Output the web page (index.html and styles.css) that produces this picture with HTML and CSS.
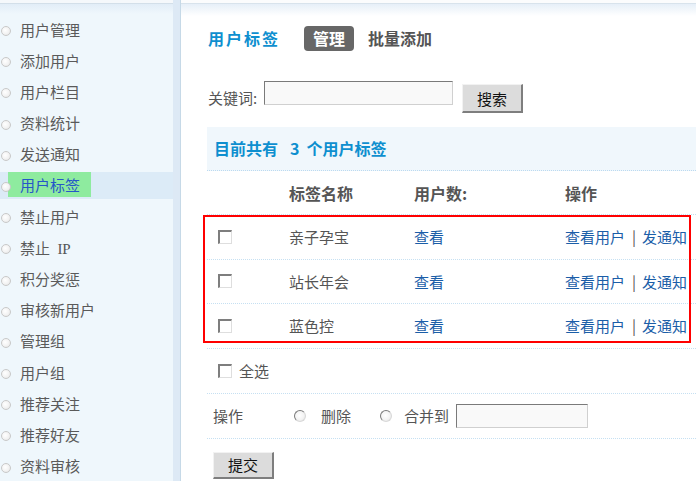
FILE: index.html
```html
<!DOCTYPE html>
<html lang="zh-CN">
<head>
<meta charset="utf-8">
<title>用户标签</title>
<link rel="stylesheet" href="styles.css">
</head>
<body>
<div class="page">
  <aside class="sidebar">
    <ul class="nav">
      <li class="nav-item"><a class="nav-link">用户管理</a></li>
      <li class="nav-item"><a class="nav-link">添加用户</a></li>
      <li class="nav-item"><a class="nav-link">用户栏目</a></li>
      <li class="nav-item"><a class="nav-link">资料统计</a></li>
      <li class="nav-item"><a class="nav-link">发送通知</a></li>
      <li class="nav-item nav-item-active"><a class="nav-link">用户标签</a></li>
      <li class="nav-item"><a class="nav-link">禁止用户</a></li>
      <li class="nav-item"><a class="nav-link">禁止&nbsp;<span class="latin">IP</span></a></li>
      <li class="nav-item"><a class="nav-link">积分奖惩</a></li>
      <li class="nav-item"><a class="nav-link">审核新用户</a></li>
      <li class="nav-item"><a class="nav-link">管理组</a></li>
      <li class="nav-item"><a class="nav-link">用户组</a></li>
      <li class="nav-item"><a class="nav-link">推荐关注</a></li>
      <li class="nav-item"><a class="nav-link">推荐好友</a></li>
      <li class="nav-item"><a class="nav-link">资料审核</a></li>
    </ul>
  </aside>
  <main class="main">
    <div class="title-row">
      <h1 class="title">用户标签</h1>
      <a class="tab tab-active">管理</a>
      <a class="tab">批量添加</a>
    </div>
    <form class="search">
      <label class="search-label">关键词:</label>
      <input class="text-input search-input" type="text">
      <button class="btn btn-search" type="button">搜索</button>
    </form>
    <div class="summary">目前共有<span class="num">3</span>个用户标签</div>
    <div class="table">
      <div class="tr th">
        <div class="td"></div>
        <div class="td">标签名称</div>
        <div class="td">用户数:</div>
        <div class="td">操作</div>
      </div>
      <div class="tr">
        <div class="td td-check"><input class="check" type="checkbox"></div>
        <div class="td">亲子孕宝</div>
        <div class="td"><a class="link">查看</a></div>
        <div class="td"><a class="link">查看用户</a><span class="sep">|</span><a class="link">发通知</a></div>
      </div>
      <div class="tr">
        <div class="td td-check"><input class="check" type="checkbox"></div>
        <div class="td">站长年会</div>
        <div class="td"><a class="link">查看</a></div>
        <div class="td"><a class="link">查看用户</a><span class="sep">|</span><a class="link">发通知</a></div>
      </div>
      <div class="tr">
        <div class="td td-check"><input class="check" type="checkbox"></div>
        <div class="td">蓝色控</div>
        <div class="td"><a class="link">查看</a></div>
        <div class="td"><a class="link">查看用户</a><span class="sep">|</span><a class="link">发通知</a></div>
      </div>
      <div class="highlight"></div>
    </div>
    <div class="select-all">
      <input class="check" type="checkbox"><span class="select-all-label">全选</span>
    </div>
    <div class="ops">
      <span class="ops-label">操作</span>
      <input class="radio" type="radio" name="op"><span class="ops-opt">删除</span>
      <input class="radio" type="radio" name="op"><span class="ops-opt ops-merge">合并到</span>
      <input class="text-input merge-input" type="text">
    </div>
    <button class="btn btn-submit" type="button">提交</button>
  </main>
</div>
</body>
</html>
```

FILE: styles.css
```css
* { box-sizing: border-box; }

html, body {
  margin: 0;
  padding: 0;
}

body {
  width: 696px;
  height: 481px;
  overflow: hidden;
  font-family: "Noto Sans CJK SC", "DejaVu Sans", sans-serif;
  font-size: 15px;
  color: #555;
  background: #fff;
}

.page {
  display: flex;
  height: 481px;
}

/* Sidebar */
.sidebar {
  width: 180px;
  flex: none;
  border-right: 7px solid #dde9f5;
  background: linear-gradient(#f5f8fb 0, #f5f8fb 3px, #d3dfe9 3px, #d3dfe9 4px, #e2edf7 4px, #eff7fc 14px);
  padding-top: 16.5px;
}

.nav {
  list-style: none;
  margin: 0;
  padding: 0;
}

.nav-item {
  position: relative;
  height: 27px;
  margin-bottom: 4.2px;
  display: flex;
  align-items: center;
}

.nav-item::before {
  content: "";
  position: absolute;
  left: 1px;
  top: 9.5px;
  width: 8px;
  height: 8px;
  border-radius: 50%;
  border: 1px solid #c9c9c9;
  background: radial-gradient(circle at 40% 40%, #ffffff 0, #f1f1f1 60%, #dcdcdc 100%);
}

.nav-link {
  display: inline-block;
  height: 25px;
  line-height: 25px;
  margin: -2px 0 0 8px;
  padding: 0 11px 0 12px;
  color: #5a5a5a;
  font-size: 15px;
}

.latin {
  margin-left: 4px;
  font-family: "Liberation Serif", serif;
  font-size: 15px;
  color: #555;
}

.nav-item-active {
  background: #dcebf7;
}

.nav-item-active .nav-link {
  background: #8eeb9f;
  color: #2657c8;
}

/* Main */
.main {
  flex: 1;
  min-width: 0;
  border-left: 1px solid #c6d9e7;
  padding: 26px 0 0 26px;
  background: linear-gradient(#fbfcfd 0, #fbfcfd 3px, #d8e3ec 3px, #d8e3ec 4px, #e6eff8 4px, #ffffff 16px);
}

.title-row {
  display: flex;
  align-items: center;
  height: 25px;
}

.title {
  margin: 0 24px 0 1px;
  font-size: 16px;
  font-weight: bold;
  letter-spacing: 2px;
  color: #0e8fcf;
  line-height: 25px;
}

.tab {
  font-size: 16px;
  font-weight: bold;
  color: #555;
  line-height: 25px;
  margin-left: 14px;
}

.tab-active {
  margin-left: 0;
  height: 25px;
  padding: 0 9px;
  border-radius: 4px;
  background: #676767;
  color: #fff;
}

/* Search */
.search {
  display: flex;
  align-items: flex-start;
  margin: 30px 0 0 0;
}

.search-label {
  width: 56px;
  margin: 5px 0 0 1px;
  line-height: 24px;
  color: #555;
}

.text-input {
  height: 24px;
  border-style: solid;
  border-width: 1px;
  border-color: #7a7a7a #d0d0d0 #d0d0d0 #7a7a7a;
  background: #f9f9f9;
  padding: 0 3px;
  font: inherit;
  outline: none;
}

.search-input {
  width: 189px;
}

.btn {
  font-family: "Noto Sans CJK SC", sans-serif;
  font-size: 15px;
  color: #111;
  background: #dcdcdc;
  border-style: solid;
  border-width: 1px 2px 2px 1px;
  border-color: #f2f2f2 #7e7e7e #7e7e7e #f2f2f2;
  padding: 0;
  cursor: pointer;
}

.btn-search {
  width: 61px;
  height: 29px;
  margin: 3px 0 0 9px;
}

/* Summary */
.summary {
  margin-top: 14px;
  height: 44px;
  line-height: 43px;
  padding-left: 7px;
  background: #f0f7fc;
  border-bottom: 1px dotted #bcdaf0;
  font-size: 16px;
  font-weight: bold;
  color: #0e8fcf;
}

.num {
  margin: 0 7px 0 12px;
}

/* Table */
.table {
  position: relative;
}

.tr {
  display: grid;
  grid-template-columns: 82px 125px 151px 1fr;
  align-items: center;
  height: 44.5px;
  border-bottom: 1px dotted #c6e0f2;
}

.th {
  height: 44px;
  font-size: 16px;
  font-weight: bold;
  color: #555;
}

.td {
  white-space: nowrap;
}

.td-check {
  padding-left: 11px;
  display: flex;
  align-items: center;
}

.link {
  color: #1b5ea8;
  text-decoration: none;
}

.sep {
  margin: 0 6px 0 7px;
  color: #555;
}

.check {
  -webkit-appearance: none;
  appearance: none;
  width: 14px;
  height: 14px;
  margin: 0;
  border-style: solid;
  border-width: 2px 1px 1px 2px;
  border-color: #7e7e7e #dedede #dedede #7e7e7e;
  background: #fff;
}

.highlight {
  position: absolute;
  left: -4px;
  top: 44px;
  width: 488px;
  height: 128px;
  border: 2px solid #ff0000;
  pointer-events: none;
}

/* Footer */
.select-all {
  display: flex;
  align-items: center;
  height: 45px;
  padding-left: 11px;
  border-bottom: 1px dotted #c6e0f2;
}

.select-all-label {
  margin-left: 7px;
}

.ops {
  display: flex;
  align-items: center;
  height: 45px;
  padding-left: 6px;
  border-bottom: 1px dotted #c6e0f2;
}

.ops-label {
  width: 81px;
}

.radio {
  -webkit-appearance: none;
  appearance: none;
  width: 12px;
  height: 12px;
  margin: 0 15px 0 0;
  border-radius: 50%;
  border: 1px solid #8c8c8c;
  border-color: #7a7a7a #d8d8d8 #d8d8d8 #7a7a7a;
  background: radial-gradient(circle at 45% 45%, #ffffff 0, #f3f3f3 55%, #dadada 100%);
}

.ops-opt {
  width: 59px;
}

.ops-merge {
  width: auto;
  margin-right: 7px;
  margin-left: -3px;
}

.merge-input {
  width: 132px;
}

.btn-submit {
  display: block;
  margin: 13px 0 0 6px;
  width: 61px;
  height: 27px;
}
```
